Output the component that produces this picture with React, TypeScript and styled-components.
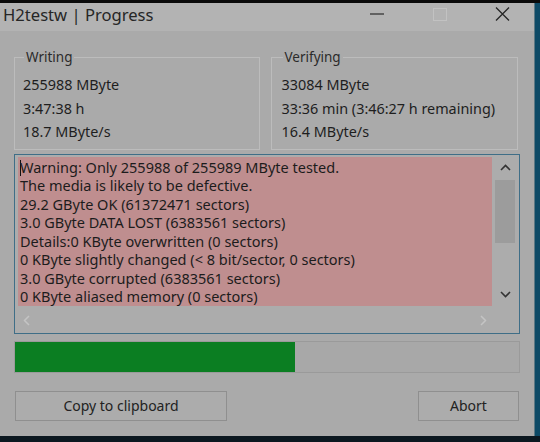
import React from "react";
import styled, { createGlobalStyle } from "styled-components";

const GlobalStyle = createGlobalStyle`
  html, body {
    margin: 0;
    padding: 0;
    background: #0c1820;
  }
  body {
    width: 540px;
    height: 442px;
    overflow: hidden;
    font-family: "Noto Sans", "Open Sans", sans-serif;
  }
`;

const reportLines = [
  "Warning: Only 255988 of 255989 MByte tested.",
  "The media is likely to be defective.",
  "29.2 GByte OK (61372471 sectors)",
  "3.0 GByte DATA LOST (6383561 sectors)",
  "Details:0 KByte overwritten (0 sectors)",
  "0 KByte slightly changed (< 8 bit/sector, 0 sectors)",
  "3.0 GByte corrupted (6383561 sectors)",
  "0 KByte aliased memory (0 sectors)",
];

const progress = 55.6;

const App = () => {
  return (
    <>
      <GlobalStyle />
      <Screen>
        <TopEdge />
        <Middle>
          <Window>
            <TitleBar>
              <Title>H2testw | Progress</Title>
              <Spacer />
              <CaptionButton>
                <svg width="14" height="2" viewBox="0 0 14 2">
                  <line x1="0" y1="1" x2="14" y2="1" stroke="#2b2b2b" strokeWidth="1.2" />
                </svg>
              </CaptionButton>
              <CaptionButton>
                <svg width="14" height="13" viewBox="0 0 14 13">
                  <rect x="0.5" y="0.5" width="13" height="12" fill="none" stroke="#c2c2c2" strokeWidth="1" />
                </svg>
              </CaptionButton>
              <CaptionButton>
                <svg width="15" height="14" viewBox="0 0 15 14">
                  <path d="M1 0.5 L14 13.5 M14 0.5 L1 13.5" stroke="#262626" strokeWidth="1.3" />
                </svg>
              </CaptionButton>
            </TitleBar>

            <Body>
              <Groups>
                <Group>
                  <Legend>Writing</Legend>
                  <Line>255988 MByte</Line>
                  <Line>3:47:38 h</Line>
                  <Line>18.7 MByte/s</Line>
                </Group>
                <Group $indent={10}>
                  <Legend>Verifying</Legend>
                  <Line>33084 MByte</Line>
                  <Line>33:36 min (3:46:27 h remaining)</Line>
                  <Line>16.4 MByte/s</Line>
                </Group>
              </Groups>

              <Report>
                <ReportText>
                  {reportLines.map((line, i) => (
                    <ReportLine key={i}>
                      {i === 0 && <Caret />}
                      {line}
                    </ReportLine>
                  ))}
                </ReportText>
                <VScroll>
                  <ArrowCell>
                    <svg width="11" height="7" viewBox="0 0 11 7">
                      <polyline points="1,6 5.5,1.5 10,6" fill="none" stroke="#333" strokeWidth="1.6" />
                    </svg>
                  </ArrowCell>
                  <Thumb />
                  <Spacer />
                  <ArrowCell>
                    <svg width="11" height="7" viewBox="0 0 11 7">
                      <polyline points="1,1 5.5,5.5 10,1" fill="none" stroke="#333" strokeWidth="1.6" />
                    </svg>
                  </ArrowCell>
                </VScroll>
                <HScroll>
                  <svg width="7" height="11" viewBox="0 0 7 11">
                    <polyline points="6,1 1.5,5.5 6,10" fill="none" stroke="#c4c4c4" strokeWidth="1.5" />
                  </svg>
                  <svg width="7" height="11" viewBox="0 0 7 11">
                    <polyline points="1,1 5.5,5.5 1,10" fill="none" stroke="#c4c4c4" strokeWidth="1.5" />
                  </svg>
                </HScroll>
                <Corner />
              </Report>

              <ProgressTrack>
                <ProgressFill style={{ width: `${progress}%` }} />
              </ProgressTrack>

              <Buttons>
                <Button $width={212}>Copy to clipboard</Button>
                <Button $width={101}>Abort</Button>
              </Buttons>
            </Body>
          </Window>
          <SideEdge />
        </Middle>
      </Screen>
    </>
  );
};

const Screen = styled.div`
  display: flex;
  flex-direction: column;
  width: 540px;
  height: 442px;
  background: #0c1820;
`;

const TopEdge = styled.div`
  height: 3px;
  background: #0a0a0a;
`;

const Middle = styled.div`
  display: flex;
  height: 433px;
`;

const Window = styled.div`
  display: flex;
  flex-direction: column;
  width: 534px;
  background: #aaaaaa;
`;

const SideEdge = styled.div`
  flex: 1;
  background: #0d4a66;
  border-left: 1px solid #5c7884;
`;

const TitleBar = styled.div`
  display: flex;
  align-items: center;
  height: 22px;
  padding: 0 0 6px 3px;
  background: #b3b3b3;
`;

const Title = styled.div`
  font-size: 16.6px;
  color: #262626;
`;

const Spacer = styled.div`
  flex: 1;
`;

const CaptionButton = styled.div`
  display: flex;
  align-items: center;
  justify-content: center;
  width: 63px;
  height: 22px;
`;

const Body = styled.div`
  display: flex;
  flex-direction: column;
  padding: 17px 14px 0 14px;
`;

const Groups = styled.div`
  display: flex;
  gap: 11px;
  padding-right: 2px;
`;

const Group = styled.fieldset<{ $indent?: number }>`
  flex: 1;
  margin: 0;
  min-width: 0;
  border: 1px solid #bcbcbc;
  padding: 7px 8px 5px ${(p) => p.$indent ?? 8}px;
  color: #1e1e1e;
  font-size: 14.4px;
`;

const Legend = styled.legend`
  margin-left: 1px;
  padding: 0 2px;
  font-size: 13.5px;
  line-height: 18px;
  color: #2a2a2a;
`;

const Line = styled.div`
  line-height: 23.5px;
  white-space: nowrap;
`;

const Report = styled.div`
  display: grid;
  grid-template-columns: 474px 1fr;
  grid-template-rows: 149px 1fr;
  height: 180px;
  margin-top: 4px;
  padding: 2px 2px 2px 3px;
  box-sizing: border-box;
  border: 1px solid #3f6e87;
  background: #acacac;
`;

const ReportText = styled.div`
  background: #bf8e8f;
  padding: 1px 0 0 2px;
  color: #1c1c1c;
  font-size: 14.5px;
  overflow: hidden;
`;

const ReportLine = styled.div`
  line-height: 18.5px;
  white-space: nowrap;
`;

const Caret = styled.span`
  display: inline-block;
  width: 1px;
  height: 16px;
  margin-right: -1px;
  vertical-align: -3px;
  background: #111;
`;

const VScroll = styled.div`
  display: flex;
  flex-direction: column;
  align-items: center;
  padding-left: 1px;
`;

const ArrowCell = styled.div`
  display: flex;
  align-items: center;
  justify-content: center;
  height: 22px;
  width: 100%;
`;

const Thumb = styled.div`
  width: 20px;
  height: 63px;
  margin-top: 1px;
  background: #9c9c9c;
`;

const HScroll = styled.div`
  display: flex;
  align-items: center;
  justify-content: space-between;
  padding: 5px 5px 0 5px;
`;

const Corner = styled.div``;

const ProgressTrack = styled.div`
  height: 30px;
  margin-top: 7px;
  border: 1px solid #9a9a9a;
  background: #a8a8a8;
`;

const ProgressFill = styled.div`
  height: 100%;
  background: #0b7e22;
`;

const Buttons = styled.div`
  display: flex;
  justify-content: space-between;
  margin-top: 18px;
  padding: 0 1px 0 1px;
`;

const Button = styled.button<{ $width: number }>`
  width: ${(p) => p.$width}px;
  height: 30px;
  padding: 0;
  border: 1px solid #8f8f8f;
  background: #acacac;
  font-family: "Noto Sans", "Open Sans", sans-serif;
  font-size: 14px;
  color: #222;
`;

export default App;
